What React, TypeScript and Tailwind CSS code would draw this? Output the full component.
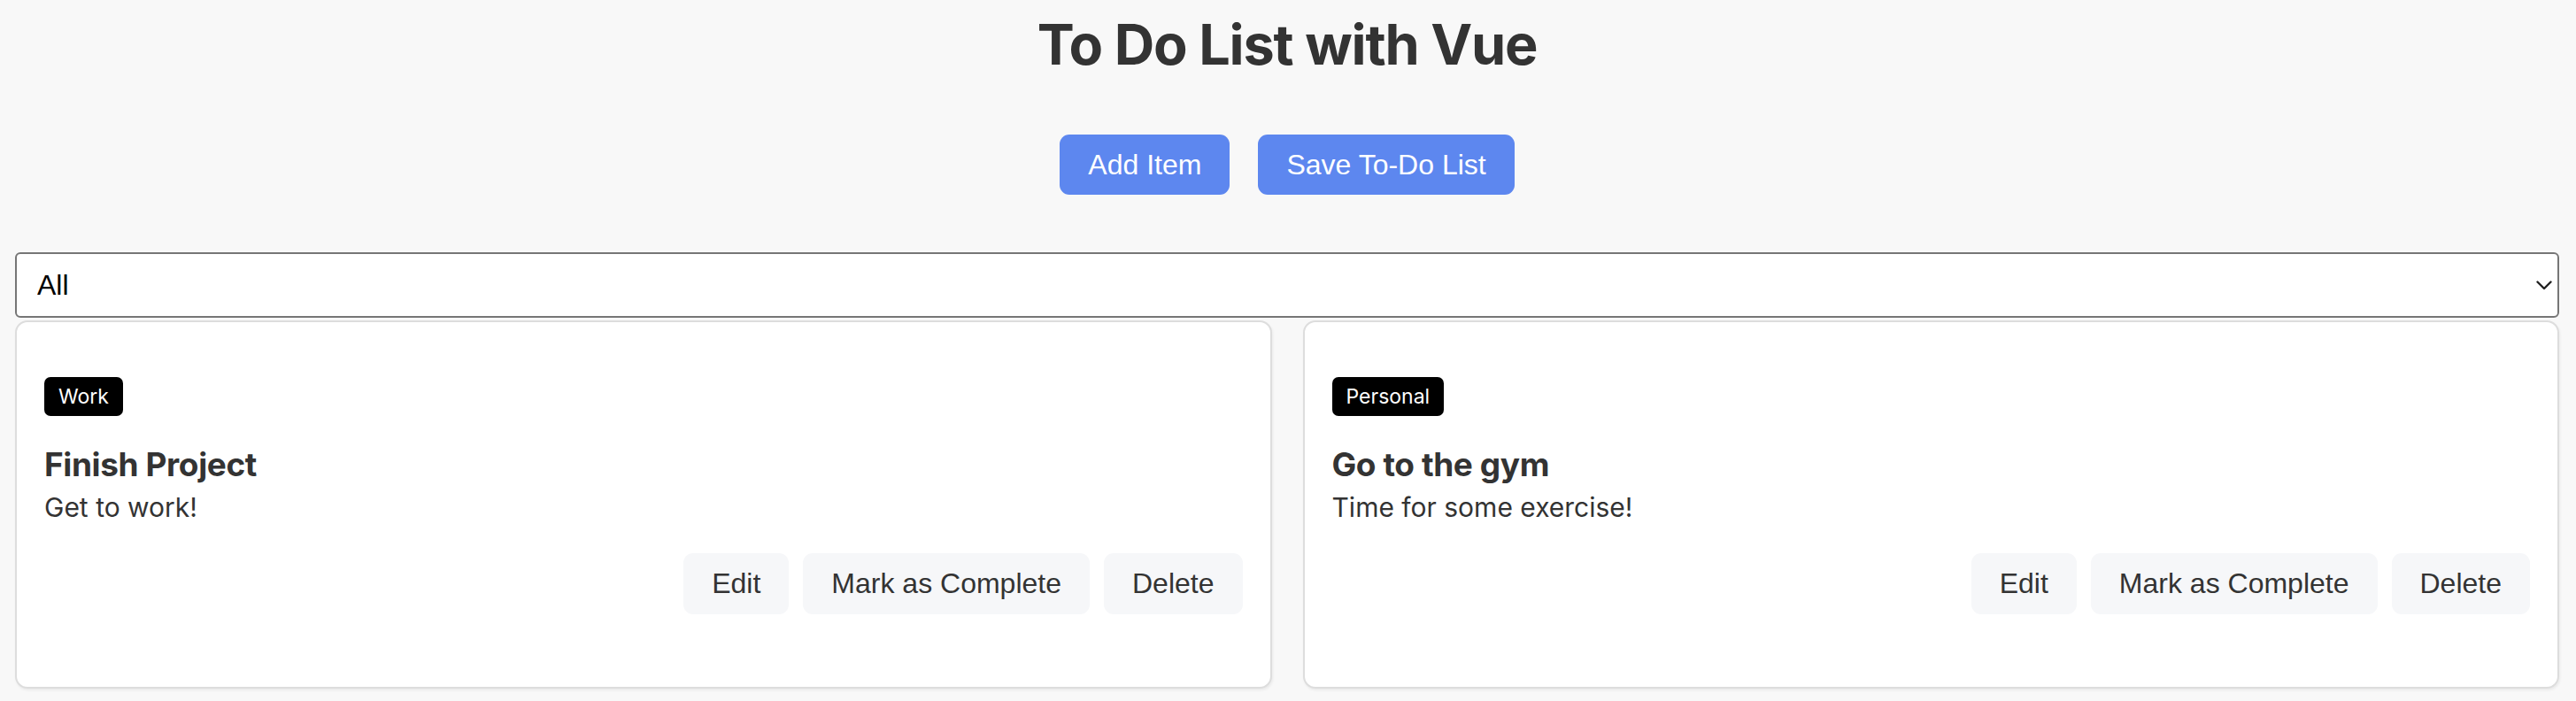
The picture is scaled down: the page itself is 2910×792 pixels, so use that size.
import React from 'react';

type Todo = {
  category: string;
  title: string;
  description: string;
};

const todos: Todo[] = [
  { category: 'Work', title: 'Finish Project', description: 'Get to work!' },
  { category: 'Personal', title: 'Go to the gym', description: 'Time for some exercise!' },
];

const TodoCard: React.FC<{ todo: Todo }> = ({ todo }) => {
  return (
    <div className="bg-white border-2 border-[#dddddd] rounded-[14px] shadow-[1px_2px_3px_rgba(0,0,0,0.06)] pt-[62px] px-[31px] pb-[82px]">
      <span className="inline-block bg-black text-white rounded-[7px] px-[16px] h-[44px] leading-[44px] text-[23px] font-['Inter',sans-serif]">
        {todo.category}
      </span>
      <h3 className="mt-[29px] text-[37px] leading-[52px] font-bold tracking-[-0.4px] text-[#333333] font-['Inter',sans-serif]">
        {todo.title}
      </h3>
      <p className="mt-[4px] text-[30px] leading-[36px] text-[#333333] font-['Inter',sans-serif]">
        {todo.description}
      </p>
      <div className="mt-[34px] flex justify-end gap-[16px]">
        <button className="bg-[#f6f7f9] text-[#333333] rounded-[11px] px-[32px] py-[16px] text-[32px] leading-[37px] font-['Liberation_Sans',Arial,sans-serif]">
          Edit
        </button>
        <button className="bg-[#f6f7f9] text-[#333333] rounded-[11px] px-[32px] py-[16px] text-[32px] leading-[37px] font-['Liberation_Sans',Arial,sans-serif]">
          Mark as Complete
        </button>
        <button className="bg-[#f6f7f9] text-[#333333] rounded-[11px] px-[32px] py-[16px] text-[32px] leading-[37px] font-['Liberation_Sans',Arial,sans-serif]">
          Delete
        </button>
      </div>
    </div>
  );
};

const App: React.FC = () => {
  return (
    <div className="min-h-[792px] bg-[#f8f8f8] pl-[17px] pr-[19px] pt-[12px]">
      <h1 className="text-center text-[63px] leading-[76px] font-bold tracking-[-1.2px] text-[#333333] font-['Inter',sans-serif]">
        To Do List with Vue
      </h1>

      <div className="mt-[64px] flex justify-center gap-[32px]">
        <button className="bg-[#5d87ef] text-white rounded-[11px] px-[32px] py-[15px] text-[32px] leading-[38px] font-['Liberation_Sans',Arial,sans-serif]">
          Add Item
        </button>
        <button className="bg-[#5d87ef] text-white rounded-[11px] px-[32px] py-[15px] text-[32px] leading-[38px] font-['Liberation_Sans',Arial,sans-serif]">
          Save To-Do List
        </button>
      </div>

      <div className="relative mt-[65px]">
        <select className="appearance-none w-full h-[74px] bg-white border-2 border-[#767676] rounded-[6px] pl-[23px] text-[32px] text-black font-['Liberation_Sans',Arial,sans-serif] outline-none">
          <option>All</option>
          <option>Work</option>
          <option>Personal</option>
        </select>
        <svg
          className="pointer-events-none absolute right-[8px] top-[32px]"
          width="18"
          height="11"
          viewBox="0 0 18 11"
          fill="none"
        >
          <path d="M1.5 1.5 L9 9 L16.5 1.5" stroke="#222222" strokeWidth="2.4" strokeLinecap="round" strokeLinejoin="round" />
        </svg>
      </div>

      <div className="mt-[3px] grid grid-cols-2 gap-[35px]">
        {todos.map((todo) => (
          <TodoCard key={todo.title} todo={todo} />
        ))}
      </div>
    </div>
  );
};

export default App;
